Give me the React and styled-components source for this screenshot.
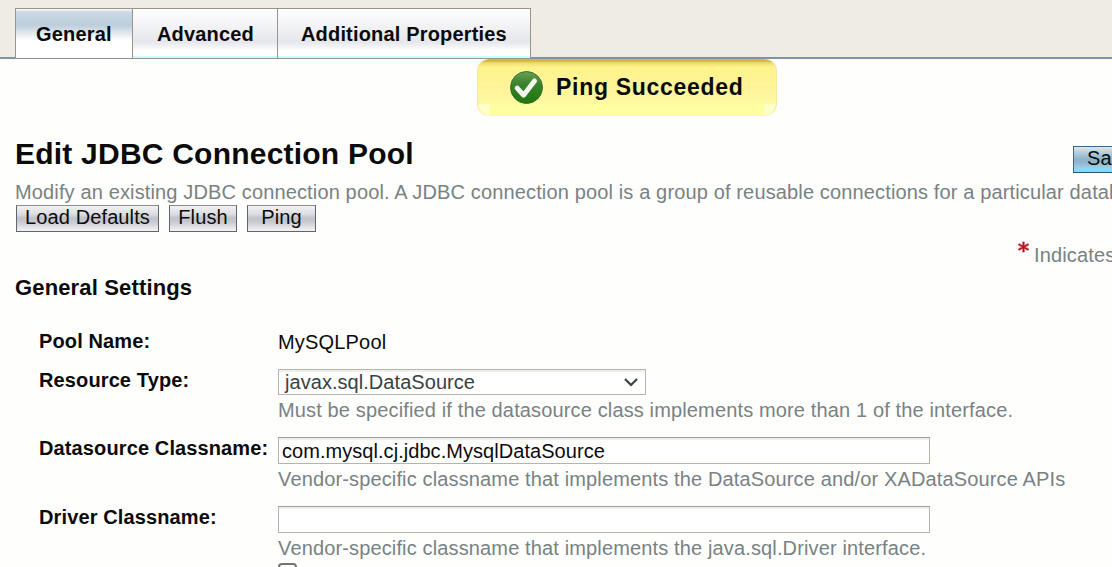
import React from "react";
import styled, { createGlobalStyle } from "styled-components";

const Global = createGlobalStyle`
  body {
    margin: 0;
    overflow: hidden;
    background: #fefefd;
    color: #0b0b0b;
    font-family: "Liberation Sans", Arial, sans-serif;
    font-size: 20px;
  }
  * { box-sizing: border-box; }
`;

const Page = styled.div`
  width: 1112px;
  height: 567px;
  overflow: hidden;
  white-space: nowrap;
`;

const TabBar = styled.nav`
  display: flex;
  height: 59px;
  padding: 8px 0 0 15px;
  background: linear-gradient(#7f93a0, #7f93a0) bottom / 100% 2px no-repeat #efebe5;
`;

const Tab = styled.div`
  width: ${(p) => p.$width}px;
  height: 51px;
  padding-left: ${(p) => p.$indent}px;
  margin-right: -1px;
  border: 1px solid #9b9288;
  border-bottom-color: ${(p) => (p.$active ? "#7f93a0" : "#9b9288")};
  background: ${(p) =>
    p.$active
      ? "linear-gradient(#fafcfd 0, #ccdae5 3px, #bccddc 16px, #ffffff 31px)"
      : "linear-gradient(#cff 0, #cff 2px) bottom / 100% 2px no-repeat, linear-gradient(#ffffff 0, #e6e7ec 33px, #ffffff 42px)"};
  font-weight: bold;
  line-height: 50px;
  letter-spacing: 0.17px;
`;

const AlertRow = styled.div`
  display: flex;
  height: 75px;
  padding-left: 477px;
`;

const Alert = styled.div`
  display: flex;
  align-items: center;
  width: 300px;
  height: 57px;
  padding-left: 33px;
  border-radius: 12px;
  background:
    linear-gradient(#ffffc8, #ffffc8) 0 100% / 13px 12px no-repeat,
    linear-gradient(#ffffc8, #ffffc8) 100% 100% / 13px 12px no-repeat,
    linear-gradient(#c8ad39 0, #d0b746 2px, #eedb70 4px, #fff38c 8px, #fff49a 30px, #fffaa3 45px, #ffff9f 46px);
  box-shadow: inset 1px 0 1px #f4e79a, inset -1px 0 1px #f4e79a;
`;

const AlertText = styled.span`
  margin: -1px 0 0 13px;
  font-size: 23px;
  font-weight: bold;
  letter-spacing: 0.7px;
`;

const TitleRow = styled.header`
  display: flex;
  height: 45px;
  padding-left: 15px;
`;

const Title = styled.h1`
  width: 1058px;
  flex: none;
  margin: 0;
  font-size: 30px;
  line-height: 39px;
  letter-spacing: 0.22px;
`;

const Help = styled.p`
  margin: 0;
  color: #788284;
  line-height: 24px;
  letter-spacing: 0.14px;
`;

const Intro = styled(Help)`
  height: 26px;
  padding: 1px 0 0 15px;
`;

const Button = styled.button`
  flex: none;
  width: ${(p) => p.$width}px;
  height: 27px;
  padding: 0 0 3px;
  border: 1px solid #5d6670;
  border-top-color: #8c8c8c;
  background: linear-gradient(#f2f2f4 0, #dddee2 8px, #c2c3ca 12px, #c9cad0 16px, #f4f4f6 25px);
  color: #0b0b0b;
  font: 20px/22px "Liberation Sans", Arial, sans-serif;
  letter-spacing: 0.12px;
`;

const PrimaryButton = styled(Button)`
  margin-top: 12px;
  padding-left: 13px;
  text-align: left;
  border-color: #3d6585 #3d6585 #2c5577;
  background: linear-gradient(#dbe7ee 0, #adc8da 7px, #8fb3ca 12px, #91b7cf 16px, #9fd0ea 21px, #7fdcff 22px);
`;

const Buttons = styled.div`
  display: flex;
  gap: 10px;
  height: 36px;
  padding-left: 16px;
`;

const Legend = styled.div`
  display: flex;
  height: 30px;
  padding-left: 1017px;
  gap: 5px;
  svg { flex: none; }
  p { margin-top: 2px; }
`;

const Section = styled.h2`
  margin: 0;
  height: 55px;
  padding-left: 15px;
  font-size: 22px;
  line-height: 34px;
  letter-spacing: 0.15px;
`;

const Row = styled.div`
  display: grid;
  grid-template-columns: 239px 1fr;
  height: ${(p) => p.$height}px;
  padding-left: 39px;
`;

const Label = styled.label`
  font-weight: bold;
  line-height: 30px;
  letter-spacing: 0.12px;
`;

const Value = styled.span`
  line-height: 32px;
  letter-spacing: 0.18px;
`;

const Field = styled.div`
  padding-top: 4px;
`;

const Input = styled.input`
  display: block;
  width: 652px;
  height: 27px;
  margin-bottom: 3px;
  padding: 1px 3px 0;
  border: 1px solid #b9b4aa;
  border-top-color: #a39e94;
  border-radius: 0;
  outline: none;
  box-shadow: inset 0 2px 1px #eeeeec;
  background: #fff;
  color: #0b0b0b;
  font: 20px "Liberation Sans", Arial, sans-serif;
  letter-spacing: 0.05px;
`;

const Select = styled.div`
  display: flex;
  justify-content: space-between;
  align-items: center;
  width: 368px;
  height: 26px;
  margin-bottom: 3px;
  padding: 0 7px 0 6px;
  border: 1px solid #b9b4aa;
  box-shadow: inset 0 2px 1px #eeeeec;
  background: #fff;
  color: #3a4143;
  letter-spacing: 0.05px;
`;

const Checkbox = styled.div`
  width: 19px;
  height: 19px;
  border: 2px solid #747474;
  border-radius: 4px;
  background: #fff;
`;

const CheckIcon = () => (
  <svg width="33" height="33" viewBox="0 0 33 33">
    <defs>
      <linearGradient id="green" x2="0" y2="1">
        <stop stopColor="#67a153" />
        <stop offset=".4" stopColor="#3b812e" />
        <stop offset="1" stopColor="#1d7808" />
      </linearGradient>
    </defs>
    <circle cx="16.5" cy="16.5" r="16" fill="url(#green)" stroke="#416d35" strokeWidth="1" />
    <path d="M7.2 17.2l6.3 7L24.5 10" fill="none" stroke="#f3f5f1" strokeWidth="5" strokeLinecap="round" strokeLinejoin="round" />
  </svg>
);

const Asterisk = () => (
  <svg width="12" height="12" viewBox="0 0 12 12" fill="none">
    <path d="M6.5 .8v10.4M1.5 3.2l10 5.6M11.5 3.2l-10 5.6" stroke="#e3a0a6" strokeWidth="3" />
    <path d="M6.5 .8v10.4M1.5 3.2l10 5.6M11.5 3.2l-10 5.6" stroke="#b3111f" strokeWidth="1.5" />
  </svg>
);

const Chevron = () => (
  <svg width="14" height="9" viewBox="0 0 14 9" fill="none" stroke="#3a4143" strokeWidth="2.2">
    <path d="M1 1l6 6 6-6" />
  </svg>
);

export default function App() {
  return (
    <Page>
      <Global />
      <TabBar>
        <Tab $active $width={118} $indent={20}>General</Tab>
        <Tab $width={146} $indent={24}>Advanced</Tab>
        <Tab $width={254} $indent={23}>Additional Properties</Tab>
      </TabBar>
      <AlertRow>
        <Alert>
          <CheckIcon />
          <AlertText>Ping Succeeded</AlertText>
        </Alert>
      </AlertRow>
      <TitleRow>
        <Title>Edit JDBC Connection Pool</Title>
        <PrimaryButton $width={64}>Sa</PrimaryButton>
      </TitleRow>
      <Intro>
        Modify an existing JDBC connection pool. A JDBC connection pool is a group of reusable connections for a particular datab
      </Intro>
      <Buttons>
        <Button $width={143}>Load Defaults</Button>
        <Button $width={68}>Flush</Button>
        <Button $width={69}>Ping</Button>
      </Buttons>
      <Legend>
        <Asterisk />
        <Help>Indicates</Help>
      </Legend>
      <Section>General Settings</Section>
      <Row $height={39}>
        <Label>Pool Name:</Label>
        <Value>MySQLPool</Value>
      </Row>
      <Row $height={68}>
        <Label>Resource Type:</Label>
        <Field>
          <Select>
            javax.sql.DataSource
            <Chevron />
          </Select>
          <Help>Must be specified if the datasource class implements more than 1 of the interface.</Help>
        </Field>
      </Row>
      <Row $height={69}>
        <Label>Datasource Classname:</Label>
        <Field>
          <Input defaultValue="com.mysql.cj.jdbc.MysqlDataSource" />
          <Help>Vendor-specific classname that implements the DataSource and/or XADataSource APIs</Help>
        </Field>
      </Row>
      <Row $height={61}>
        <Label>Driver Classname:</Label>
        <Field>
          <Input />
          <Help>Vendor-specific classname that implements the java.sql.Driver interface.</Help>
        </Field>
      </Row>
      <Row $height={20}>
        <span />
        <Checkbox />
      </Row>
    </Page>
  );
}
